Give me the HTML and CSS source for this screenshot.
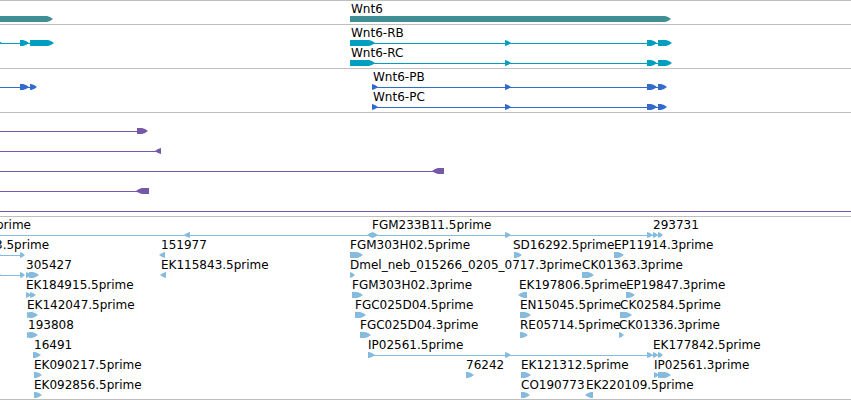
FILE: index.html
```
<!DOCTYPE html>
<html lang="en">
<head>
    <meta charset="UTF-8">
    <meta name="viewport" content="width=device-width, initial-scale=1.0">
    <title>Wnt6</title>
    <link rel="stylesheet" href="styles.css">
</head>
<body>

    <main class="browser" id="browser"></main>

    <script src="tracks.js"></script>
</body>
</html>
```
FILE: tracks.js
```
// Each lane holds:
//   labels: [x, text]
//   lines:  [start, end]         (introns, end may be '100%')
//   exons:  [start, end, strand] (strand -1 points left, default is right)
const tracks = [
    {
        type: 'gene',
        lanes: [
            { labels: [[350, 'Wnt6']], exons: [[-20, 53], [350, 671]] }
        ]
    },
    {
        type: 'transcript',
        lanes: [
            {
                labels: [[350, 'Wnt6-RB']],
                lines: [[0, 30], [350, 660]],
                exons: [[-8, 2], [20, 29], [30, 54], [350, 375], [505, 511], [647, 657], [658, 672]]
            },
            {
                labels: [[350, 'Wnt6-RC']],
                lines: [[350, 660]],
                exons: [[350, 375], [505, 511], [647, 657], [658, 672]]
            }
        ]
    },
    {
        type: 'protein',
        lanes: [
            {
                labels: [[372, 'Wnt6-PB']],
                lines: [[0, 30], [372, 660]],
                exons: [[20, 29], [30, 37], [372, 378], [505, 511], [647, 657], [658, 667]]
            },
            {
                labels: [[372, 'Wnt6-PC']],
                lines: [[372, 660]],
                exons: [[372, 378], [505, 511], [647, 657], [658, 667]]
            }
        ]
    },
    {
        type: 'prediction',
        lanes: [
            { lines: [[0, 138]], exons: [[137, 148]] },
            { lines: [[0, 158]], exons: [[155, 161, -1]] },
            { lines: [[0, 436]], exons: [[432, 444, -1]] },
            { lines: [[0, 140]], exons: [[136, 149, -1]] },
            { lines: [[0, '100%']] }
        ]
    },
    {
        type: 'est',
        lanes: [
            {
                labels: [[-5, 'prime'], [371, 'FGM233B11.5prime'], [652, '293731']],
                lines: [[0, 660]],
                exons: [[184, 190, -1], [367, 373, -1], [372, 378], [505, 511], [647, 653], [653, 658], [658, 663]]
            },
            {
                labels: [[-6, '3.5prime'], [160, '151977'], [349, 'FGM303H02.5prime'], [512, 'SD16292.5prime'], [613, 'EP11914.3prime']],
                lines: [[0, 22]],
                exons: [[-5, 1], [20, 25], [159, 165, -1], [350, 363], [514, 522], [614, 624]]
            },
            {
                labels: [[25, '305427'], [160, 'EK115843.5prime'], [349, 'Dmel_neb_015266_0205_0717.3prime'], [581, 'CK01363.3prime']],
                lines: [[0, 22]],
                exons: [[-5, 1], [20, 25], [26, 31], [29, 39], [160, 166, -1], [350, 355], [582, 594]]
            },
            {
                labels: [[25, 'EK184915.5prime'], [351, 'FGM303H02.3prime'], [518, 'EK197806.5prime'], [625, 'EP19847.3prime']],
                exons: [[26, 31], [30, 36], [352, 363], [518, 527, -1], [626, 635]]
            },
            {
                labels: [[26, 'EK142047.5prime'], [354, 'FGC025D04.5prime'], [519, 'EN15045.5prime'], [619, 'CK02584.5prime']],
                exons: [[27, 33], [29, 38], [355, 366], [520, 531], [620, 632]]
            },
            {
                labels: [[27, '193808'], [359, 'FGC025D04.3prime'], [519, 'RE05714.5prime'], [618, 'CK01336.3prime']],
                exons: [[27, 33], [29, 38], [360, 371], [520, 528], [619, 624]]
            },
            {
                labels: [[33, '16491'], [367, 'IP02561.5prime'], [652, 'EK177842.5prime']],
                lines: [[368, 660]],
                exons: [[33, 41], [368, 375], [505, 511], [647, 653], [653, 658], [658, 663]]
            },
            {
                labels: [[33, 'EK090217.5prime'], [465, '76242'], [520, 'EK121312.5prime'], [653, 'IP02561.3prime']],
                exons: [[34, 42], [466, 474], [521, 531], [654, 659], [658, 671]]
            },
            {
                labels: [[33, 'EK092856.5prime'], [520, 'CO190773'], [585, 'EK220109.5prime']],
                exons: [[34, 42], [521, 530], [585, 593, -1]]
            }
        ]
    }
];

// A box, 6px high, with a slightly rounded point on the side of its strand
function exonPath(start, end, strand) {
    const tip = Math.min(6, end - start);
    const dir = strand === -1 ? -1 : 1;
    const back = dir === 1 ? start : end;
    const front = dir === 1 ? end : start;
    const neck = front - dir * tip;
    const mid = front - dir * tip / 2;
    return `M${back} 0H${neck}L${mid} 1L${front} 3L${mid} 5L${neck} 6H${back}Z`;
}

function renderLane(lane) {
    const labels = (lane.labels || []).map(([x, text]) =>
        `<span class="label" style="left: ${x}px">${text}</span>`
    ).join('');
    const lines = (lane.lines || []).map(([start, end]) =>
        `<line x1="${start}" y1="3.5" x2="${end}" y2="3.5"/>`
    ).join('');
    const exons = (lane.exons || []).map(([start, end, strand]) =>
        `<path d="${exonPath(start, end, strand)}"/>`
    ).join('');
    return `<div class="lane">${labels}<svg class="glyphs" aria-hidden="true">${lines}${exons}</svg></div>`;
}

document.getElementById('browser').innerHTML = tracks.map(track =>
    `<section class="track ${track.type}">${track.lanes.map(renderLane).join('')}</section>`
).join('');
```
FILE: styles.css
```
body {
    margin: 0;
    background-color: #fff;
    color: #000;
    font-family: "DejaVu Sans", sans-serif;
    font-size: 12px;
    line-height: 14px;
}

.browser {
    overflow: hidden;
}

.track {
    padding: 1px 0 2px;
    border-top: 1px solid #bfbfbf;
}

.track:last-child {
    padding-bottom: 1px;
    border-bottom: 1px solid #bfbfbf;
}

.lane {
    position: relative;
    display: flex;
    align-items: flex-end;
    height: 20px;
}

/* Labels sit at their sequence position and may run over each other */
.label {
    position: absolute;
    top: 0;
    padding-left: 1px;
    white-space: nowrap;
}

.glyphs {
    display: block;
    width: 100%;
    height: 6px;
    fill: currentColor;
    stroke: none;
}

.glyphs line {
    stroke: currentColor;
    stroke-width: 1px;
    shape-rendering: crispEdges;
}

/* Track colors */
.gene .glyphs { color: #3f8f94; }
.transcript .glyphs { color: #009fc0; }
.protein .glyphs { color: #336bcc; }
.prediction .glyphs { color: #7558a8; }
.est .glyphs { color: #87bbdd; }
```
